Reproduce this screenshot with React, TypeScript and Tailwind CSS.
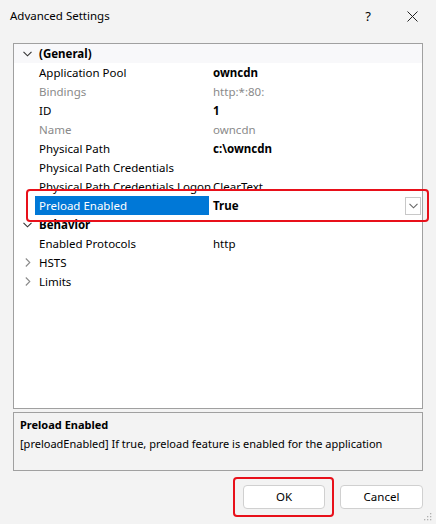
import React from "react";

const font = { fontFamily: '"Segoe UI", "Noto Sans", "Open Sans", sans-serif' };

type Row =
  | { kind: "cat"; label: string; open: boolean }
  | { kind: "prop"; label: string; value: string; dim?: boolean; bold?: boolean; selected?: boolean };

const rows: Row[] = [
  { kind: "cat", label: "(General)", open: true },
  { kind: "prop", label: "Application Pool", value: "owncdn", bold: true },
  { kind: "prop", label: "Bindings", value: "http:*:80:", dim: true },
  { kind: "prop", label: "ID", value: "1", bold: true },
  { kind: "prop", label: "Name", value: "owncdn", dim: true },
  { kind: "prop", label: "Physical Path", value: "c:\\owncdn", bold: true },
  { kind: "prop", label: "Physical Path Credentials", value: "" },
  { kind: "prop", label: "Physical Path Credentials Logon", value: "ClearText" },
  { kind: "prop", label: "Preload Enabled", value: "True", bold: true, selected: true },
  { kind: "cat", label: "Behavior", open: true },
  { kind: "prop", label: "Enabled Protocols", value: "http" },
  { kind: "cat", label: "HSTS", open: false },
  { kind: "cat", label: "Limits", open: false },
];

function ChevronDown({ color = "#333" }: { color?: string }) {
  return (
    <svg width="9" height="6" viewBox="0 0 9 6">
      <path d="M0.5 0.8 L4.5 4.8 L8.5 0.8" fill="none" stroke={color} strokeWidth="1.1" />
    </svg>
  );
}
function ChevronRight() {
  return (
    <svg width="6" height="9" viewBox="0 0 6 9">
      <path d="M0.8 0.5 L4.8 4.5 L0.8 8.5" fill="none" stroke="#8a8a8a" strokeWidth="1.1" />
    </svg>
  );
}

export default function App() {
  return (
    <div className="relative flex h-[524px] w-[436px] flex-col bg-[#f3f3f3] text-[11px] text-black" style={font}>
      {/* title bar */}
      <div className="flex h-[32px] items-center pl-[10px]">
        <span className="text-[11.5px] leading-none">Advanced Settings</span>
        <span className="ml-auto mr-[36px] text-[13px] leading-none">?</span>
        <svg width="11" height="11" viewBox="0 0 11 11" className="mr-[18px]">
          <path d="M0.5 0.5 L10.5 10.5 M10.5 0.5 L0.5 10.5" stroke="#222" strokeWidth="1" />
        </svg>
      </div>

      <div className="mx-[13px] mt-[11px] flex flex-col">
        {/* property grid */}
        <div className="relative h-[366px] border border-[#a0a0a0] bg-white">
          {rows.map((r, i) =>
            r.kind === "cat" ? (
              <div key={i} className={`flex h-[19px] items-center ${i === 0 ? "bg-[#f8f8fa]" : ""}`}>
                <div className="flex w-[25px] items-center justify-center pl-[2px]">
                  {r.open ? <ChevronDown /> : <ChevronRight />}
                </div>
                <span className={`text-[11.5px] ${r.open ? "font-bold" : ""}`}>{r.label}</span>
              </div>
            ) : (
              <div key={i} className="flex h-[19px] items-center">
                <div className="w-[21px]" />
                <div
                  className={`flex h-full w-[174px] items-center whitespace-nowrap pl-[4px] text-[11.5px] ${
                    r.selected ? "bg-[#0078d7] text-white" : r.dim ? "text-[#8a8a8a]" : ""
                  }`}
                >
                  {r.label}
                </div>
                <div className="flex h-full flex-1 items-center pl-[4px] text-[11.5px]">
                  <span className={`${r.bold ? "font-bold" : ""} ${r.dim ? "text-[#8a8a8a]" : ""}`}>{r.value}</span>
                  {r.selected && (
                    <div className="ml-auto mr-[1px] flex h-[18px] w-[16px] items-center justify-center border border-[#c8c8c8] bg-white">
                      <ChevronDown color="#666" />
                    </div>
                  )}
                </div>
              </div>
            )
          )}
          <div className="pointer-events-none absolute left-[12px] top-[145px] h-[33px] w-[403px] rounded-[4px] border-[2.5px] border-[#e8101a]" />
        </div>

        {/* description */}
        <div className="mt-[3px] h-[59px] border border-[#a0a0a0] bg-[#f3f3f3] px-[6px] pt-[2px] leading-[19px]">
          <div className="font-bold">Preload Enabled</div>
          <div>[preloadEnabled] If true, preload feature is enabled for the application</div>
        </div>

        {/* buttons */}
        <div className="relative mt-[14px] flex justify-end gap-[15px]">
          <div className="relative">
            <button className="h-[24px] w-[82px] rounded-[4px] border border-[#d0d0d0] bg-white text-[11.5px]">OK</button>
            <div className="pointer-events-none absolute -left-[10px] -top-[8px] h-[40px] w-[101px] rounded-[4px] border-[2.5px] border-[#e8101a]" />
          </div>
          <button className="h-[24px] w-[83px] rounded-[4px] border border-[#d0d0d0] bg-white text-[11.5px]">Cancel</button>
        </div>
      </div>

      {/* resize grip */}
      <svg width="8" height="8" viewBox="0 0 8 8" className="absolute bottom-[3px] right-[4px]">
        <rect x="6" y="0" width="1.3" height="1.3" fill="#b0b0b0" />
        <rect x="3" y="3" width="1.3" height="1.3" fill="#b0b0b0" />
        <rect x="6" y="3" width="1.3" height="1.3" fill="#b0b0b0" />
        <rect x="0" y="6" width="1.3" height="1.3" fill="#b0b0b0" />
        <rect x="3" y="6" width="1.3" height="1.3" fill="#b0b0b0" />
        <rect x="6" y="6" width="1.3" height="1.3" fill="#b0b0b0" />
      </svg>
    </div>
  );
}
